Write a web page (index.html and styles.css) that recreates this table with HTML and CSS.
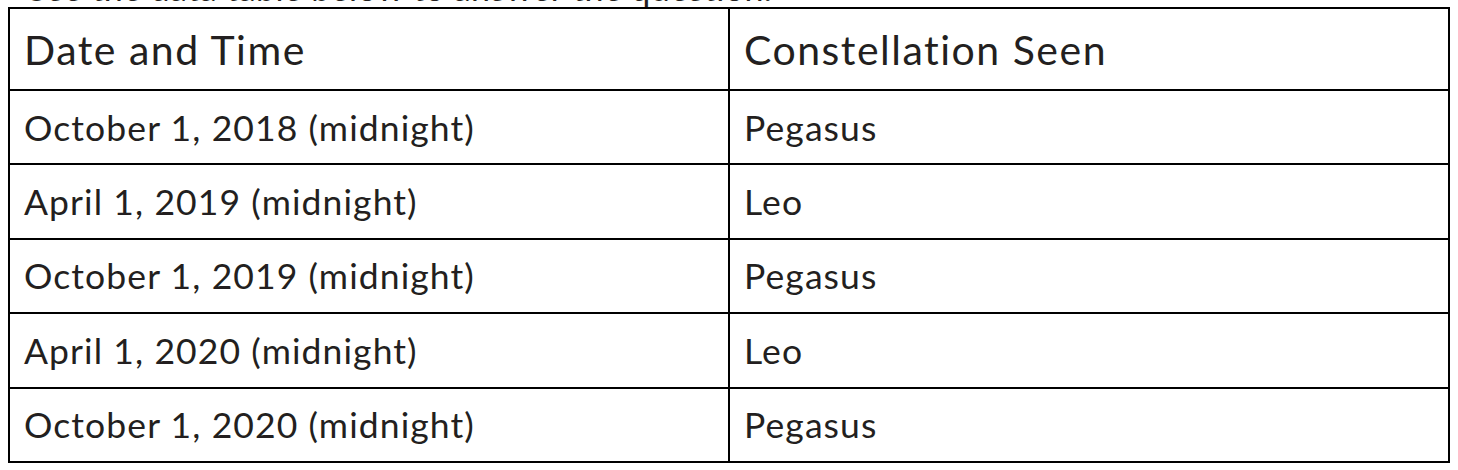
FILE: index.html
```html
<!DOCTYPE html>
<html lang="en">
<head>
<meta charset="utf-8">
<title>Constellation observations</title>
<link rel="stylesheet" href="styles.css">
</head>
<body>
<p class="intro">Use the data table below to answer the question.</p>
<table class="data">
  <thead>
    <tr><th>Date and Time</th><th>Constellation Seen</th></tr>
  </thead>
  <tbody>
    <tr><td>October 1, 2018 (midnight)</td><td>Pegasus</td></tr>
    <tr><td>April 1, 2019 (midnight)</td><td>Leo</td></tr>
    <tr><td>October 1, 2019 (midnight)</td><td>Pegasus</td></tr>
    <tr><td>April 1, 2020 (midnight)</td><td>Leo</td></tr>
    <tr><td>October 1, 2020 (midnight)</td><td>Pegasus</td></tr>
  </tbody>
</table>
</body>
</html>
```

FILE: styles.css
```css
html, body {
  background: #ffffff;
}
body {
  margin: 0 8px;
  font-family: Lato, "Open Sans", "Liberation Sans", sans-serif;
  color: #231f20;
  overflow: hidden;
}
.intro {
  margin: -32px 0 0;
  padding-left: 16px;
  font-size: 34px;
  line-height: 39px;
  height: 39px;
  letter-spacing: 0.4px;
}
.data {
  width: 100%;
  border-collapse: collapse;
  table-layout: fixed;
  border: 2px solid #000;
}
.data th,
.data td {
  width: 50%;
  border: 2px solid #000;
  text-align: left;
  vertical-align: middle;
  padding: 0 14px;
}
.data th {
  font-weight: 400;
  font-size: 41px;
  letter-spacing: 1.5px;
  height: 80px;
}
.data td {
  font-size: 35.5px;
  letter-spacing: 1.1px;
  height: 72.4px;
}
```
